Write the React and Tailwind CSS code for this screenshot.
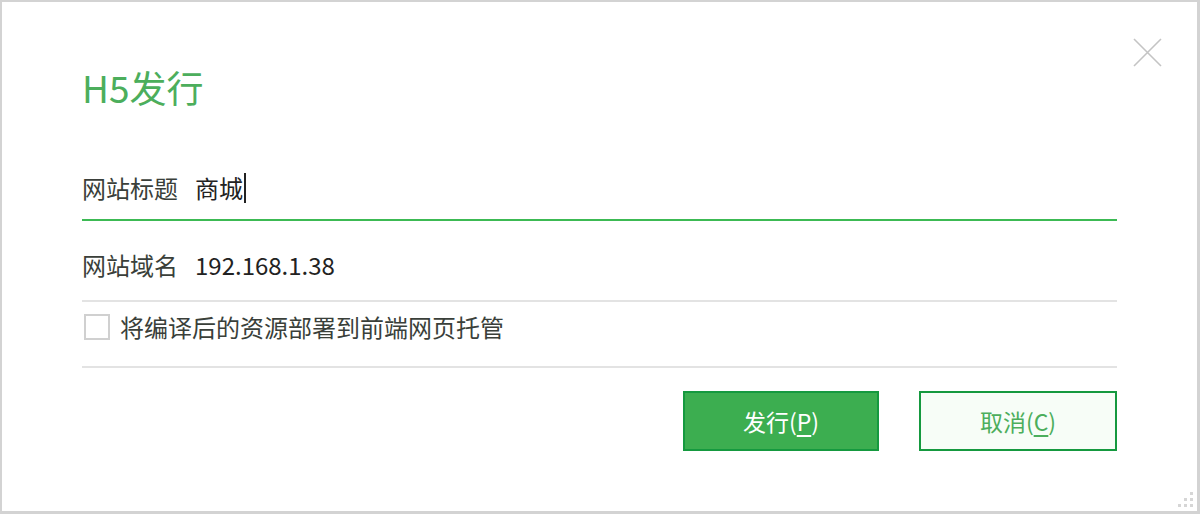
import React from "react";

export default function App() {
  const font = { fontFamily: '"Noto Sans CJK SC", "Noto Sans", sans-serif' };
  return (
    <div
      className="relative w-[1200px] h-[514px] bg-white border-t-2 border-l-2 border-r-[3px] border-b-[3px] border-[#d3d3d3] overflow-hidden"
      style={font}
    >
      <button className="absolute left-[1130px] top-[35px] w-[31px] h-[31px]" aria-label="close">
        <svg width="31" height="31" viewBox="0 0 31 31">
          <path d="M2 2 L29 29 M29 2 L2 29" stroke="#c4c4c4" strokeWidth="1.6" fill="none" />
        </svg>
      </button>

      <div className="flex flex-col pl-[80px] pr-[80px]">
        <div className="h-[65px]" />
        <h1 className="text-[37px] leading-[40px] text-[#4cae5c]">H5发行</h1>

        <div className="h-[63px]" />
        <div className="flex items-center h-[36px] text-[24px] leading-[36px]">
          <span className="text-[#3a3f3a]">网站标题</span>
          <span className="ml-[17px] text-[#222]">商城</span>
          <span className="w-[2px] h-[30px] bg-[#222] ml-[1px]" />
        </div>
        <div className="h-[13px]" />
        <div className="h-[2px] bg-[#3cba54]" />

        <div className="h-[26px]" />
        <div className="flex items-center h-[36px] text-[24px] leading-[36px]">
          <span className="text-[#3a3f3a]">网站域名</span>
          <span className="ml-[17px] text-[#222]">192.168.1.38</span>
        </div>
        <div className="h-[17px]" />
        <div className="h-[2px] bg-[#e3e3e3]" />

        <div className="h-[10px]" />
        <div className="flex items-center h-[30px]">
          <span className="w-[26px] h-[26px] border-2 border-[#d0d0d0] bg-white ml-[2px]" />
          <span className="ml-[10px] text-[24px] leading-[30px] text-[#3a3f3a]">将编译后的资源部署到前端网页托管</span>
        </div>
        <div className="h-[24px]" />
        <div className="h-[2px] bg-[#e3e3e3]" />

        <div className="h-[23px]" />
        <div className="flex justify-end gap-[40px]">
          <button className="w-[196px] h-[60px] bg-[#3cae50] border-2 border-[#15993f] text-white text-[23px] flex items-center justify-center">
            <span>发行(<span className="underline underline-offset-[4px]">P</span>)</span>
          </button>
          <button className="w-[198px] h-[60px] bg-[#f7fdf7] border-2 border-[#15993f] text-[#4cae5c] text-[23px] flex items-center justify-center">
            <span>取消(<span className="underline underline-offset-[4px]">C</span>)</span>
          </button>
        </div>
      </div>

      <div className="absolute right-[4px] bottom-[4px] grid grid-cols-3 gap-[3px]">
        <span className="w-[3px] h-[3px]" />
        <span className="w-[3px] h-[3px]" />
        <span className="w-[3px] h-[3px] bg-[#d6d6d6]" />
        <span className="w-[3px] h-[3px]" />
        <span className="w-[3px] h-[3px] bg-[#d6d6d6]" />
        <span className="w-[3px] h-[3px] bg-[#d6d6d6]" />
        <span className="w-[3px] h-[3px] bg-[#d6d6d6]" />
        <span className="w-[3px] h-[3px] bg-[#d6d6d6]" />
        <span className="w-[3px] h-[3px] bg-[#d6d6d6]" />
      </div>
    </div>
  );
}
